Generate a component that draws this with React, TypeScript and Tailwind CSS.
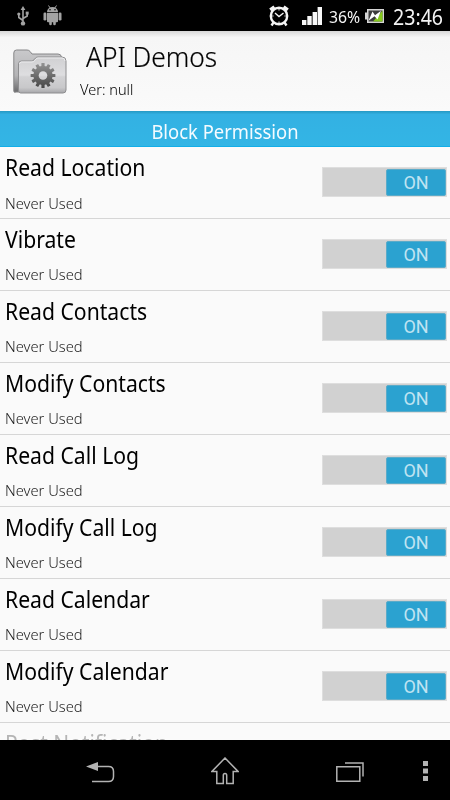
import React from "react";

const permissions = [
  "Read Location",
  "Vibrate",
  "Read Contacts",
  "Modify Contacts",
  "Read Call Log",
  "Modify Call Log",
  "Read Calendar",
  "Modify Calendar",
];

const gearTeeth = [0, 30, 60, 90, 120, 150, 180, 210, 240, 270, 300, 330];

function UsbIcon() {
  return (
    <svg width="12" height="20" viewBox="0 0 12 20" fill="none" stroke="#a3a3a3" strokeWidth="1.6">
      <path d="M6 3v14M6 14.5 1.8 11.5V8M6 12.5l4.2-2.5V7.5" />
      <path d="M6 0 3.6 4h4.8z" fill="#a3a3a3" stroke="none" />
      <circle cx="6" cy="17.4" r="2.2" fill="#a3a3a3" stroke="none" />
      <circle cx="1.8" cy="8" r="1.6" fill="#a3a3a3" stroke="none" />
      <path d="M8.7 5.6h3v3h-3z" fill="#a3a3a3" stroke="none" />
    </svg>
  );
}

function AndroidIcon() {
  return (
    <svg width="19" height="21" viewBox="0 0 19 21" fill="#a3a3a3">
      <path d="M4 7a5.5 5 0 0 1 11 0z" />
      <path d="m5.5.5 2 3M13.5.5l-2 3" stroke="#a3a3a3" strokeWidth="1" />
      <path d="M4 7.8h11v8.4a1 1 0 0 1-1 1h-1.2V19a1.3 1.3 0 0 1-2.6 0v-1.8H8.8V19a1.3 1.3 0 0 1-2.6 0v-1.8H5a1 1 0 0 1-1-1z" />
      <rect x="0.5" y="7.5" width="2.9" height="8" rx="1.3" />
      <rect x="15.6" y="7.5" width="2.9" height="8" rx="1.3" />
      <circle cx="7" cy="4.8" r="0.8" fill="#000" />
      <circle cx="12" cy="4.8" r="0.8" fill="#000" />
    </svg>
  );
}

function AlarmIcon() {
  return (
    <svg width="20" height="22" viewBox="0 0 20 22" fill="none" stroke="#f4f4f4">
      <circle cx="10" cy="11" r="8.2" strokeWidth="2.4" />
      <path d="M1.2 4.8 5.4 1.8M18.8 4.8l-4.2-3" strokeWidth="3.4" />
      <path d="m4.5 17.5-2 3M15.5 17.5l2 3" strokeWidth="2.4" />
      <path d="m6 8 4 3.5L14.5 8" strokeWidth="1.4" />
      <path d="M10 4v1.5M10 16.5V18M3.2 11h1.3M15.5 11h1.3" strokeWidth="1" />
    </svg>
  );
}

function SignalIcon() {
  return (
    <svg width="20" height="18" viewBox="0 0 20 18" fill="#f7f7f7">
      <path d="M0 13h4.4v5H0zM5.3 9h4.4v9H5.3zM10.6 5H15v13h-4.4zM15.6 0H20v18h-4.4z" />
    </svg>
  );
}

function BatteryIcon() {
  return (
    <svg width="20" height="16" viewBox="0 0 20 16">
      <path d="M2 1h17v14H2zM0 4.5h2v7H0z" fill="#d5d5d5" />
      <path d="M3.5 2.5h14v11h-14z" fill="#3c3c3c" />
      <path d="M17.5 2.5v11H8z" fill="#86c91d" />
      <path d="m3.5 12.8 4-9.2 2.5 3.6L16 2.7l-3.500 8.800-3-3.300z" fill="#fff" />
    </svg>
  );
}

function FolderIcon() {
  return (
    <svg width="54" height="46" viewBox="0 0 54 46">
      <defs>
        <linearGradient id="folderBack" x1="0" y1="0" x2="0" y2="1">
          <stop offset="0" stopColor="#c9c9cb" />
          <stop offset="0.6" stopColor="#b4b4b6" />
          <stop offset="1" stopColor="#69696b" />
        </linearGradient>
        <linearGradient id="folderFront" x1="0" y1="0" x2="0" y2="1">
          <stop offset="0" stopColor="#d0d0d2" />
          <stop offset="0.5" stopColor="#dedee0" />
          <stop offset="0.55" stopColor="#d2d2d4" />
          <stop offset="0.85" stopColor="#c8c8ca" />
          <stop offset="1" stopColor="#a7a7aa" />
        </linearGradient>
        <linearGradient id="gear" gradientUnits="userSpaceOnUse" x1="0" y1="-12" x2="0" y2="12">
          <stop offset="0" stopColor="#929292" />
          <stop offset="1" stopColor="#484848" />
        </linearGradient>
        <mask id="gearMask">
          <circle r="9.7" fill="#fff" />
          {gearTeeth.map((angle) => (
            <rect key={angle} x="-1.6" y="-12.4" width="3.2" height="5" rx="0.5" fill="#fff" transform={`rotate(${angle})`} />
          ))}
          <circle r="4.3" fill="#000" />
        </mask>
      </defs>
      <path
        d="M.8 42V4Q.8 1 3.5 1H14q2 0 3.200 1.600L19 5h26q3 0 3.500 3v35H3Q.8 44 .8 42z"
        fill="url(#folderBack)"
        stroke="#868688"
      />
      <path
        d="M5.5 41V15q0-3 3-3h10q1.500 0 2.500-1.200L22.500 9q1-1 2.500-1h24q4 0 4 4v29q0 3-3 3H7.500q-2 0-2-3z"
        fill="url(#folderFront)"
        stroke="#8e8e90"
      />
      <path d="M6.5 15q0-2 2-2h10.500q1.500 0 2.700-1.400L23 10q.8-1 2-1h24q3 0 3 3" fill="none" stroke="#ececee" />
      <g transform="translate(30 26.5)">
        <rect x="-13" y="-13" width="26" height="26" fill="url(#gear)" mask="url(#gearMask)" />
      </g>
    </svg>
  );
}

function StatusBar() {
  return (
    <header className="flex h-[31px] shrink-0 items-center bg-black pr-[7px] pl-[17px] text-[#f4f4f4]">
      <UsbIcon />
      <span className="ml-[14px]">
        <AndroidIcon />
      </span>
      <span className="ml-auto">
        <AlarmIcon />
      </span>
      <span className="ml-[13px]">
        <SignalIcon />
      </span>
      <span className="ml-[7px] w-[30px] whitespace-nowrap">
        <span className="mt-[2px] inline-block origin-left scale-x-[0.93] text-[17px] leading-[29px]">36%</span>
      </span>
      <span className="ml-[6px]">
        <BatteryIcon />
      </span>
      <span className="ml-[8px] w-[50px] whitespace-nowrap">
        <span className="mt-px inline-block origin-left scale-x-[0.91] text-[21.5px] leading-[29px]">23:46</span>
      </span>
    </header>
  );
}

function Toggle() {
  return (
    <div className="mr-[3px] flex h-[30px] w-[125px] items-center justify-end border border-[#dedede] bg-[#d1d1d1]">
      <div className="flex h-[27px] w-[60px] items-center justify-center rounded-[2px] border border-[#5aabc9] bg-[#2ba2d0] pt-px font-[Roboto] text-[18px] text-[#c0e4f2]">
        ON
      </div>
    </div>
  );
}

function PermissionRow({ name }: { name: string }) {
  return (
    <li className="flex h-[71.95px] shrink-0 items-center justify-between border-b border-[#d6d6d6] pl-[5px]">
      <div className="flex h-full flex-col whitespace-nowrap">
        <span className="mt-[4px] block origin-left scale-x-[0.92] text-[23px] leading-[32px] text-black">
          {name}
        </span>
        <span className="mt-[9.5px] block origin-left scale-x-[0.98] text-[15px] leading-[20px] font-light text-[#222]">
          Never Used
        </span>
      </div>
      <Toggle />
    </li>
  );
}

function NavBar() {
  return (
    <footer className="flex h-[60px] shrink-0 items-center bg-black pt-[2px] pr-[22px] pl-[86px]">
      <svg className="mt-[2px]" width="29" height="22" viewBox="0 0 29 22" fill="none" stroke="#b3b3b3" strokeWidth="1.5">
        <path d="M11 5.5h11.5q5 0 5 5v5q0 5-5 5H6" />
        <path d="M0 5.5 12 1v9z" fill="#b3b3b3" stroke="none" />
      </svg>
      <svg className="ml-[96px]" width="28" height="28" viewBox="0 0 28 28" fill="none" stroke="#b3b3b3" strokeWidth="1.5">
        <path d="M14 1 .9 14.5h4.900v12h6.500v-8q0-2 1.700-2t1.700 2v8h6.500v-12h4.900z" />
      </svg>
      <svg className="mt-[2px] ml-[97px]" width="28" height="20" viewBox="0 0 28 20" fill="none" stroke="#b3b3b3" strokeWidth="1.5">
        <path d="M.8 4.8h23v14.400H.8zM9 1h18v13.500" />
      </svg>
      <svg className="ml-auto" width="5" height="20" viewBox="0 0 5 20" fill="#b3b3b3">
        <path d="M0 0h5v5H0zM0 7.5h5v5H0zM0 15h5v5H0z" />
      </svg>
    </footer>
  );
}

export default function App() {
  return (
    <div className="flex h-[800px] w-[450px] flex-col overflow-hidden bg-[#fafafa] font-['Noto_Sans',sans-serif]">
      <StatusBar />

      {/* App info */}
      <section className="flex h-[80px] shrink-0 items-start bg-linear-to-b from-[#d8d8d8] via-[#f6f6f6] via-8% to-[#fafafa] pl-[13px]">
        <div className="mt-[18px]">
          <FolderIcon />
        </div>
        <div className="ml-[13px] whitespace-nowrap text-black">
          <h1 className="mt-[7px] ml-[6px] origin-left scale-x-[0.94] text-[28px] leading-[36px] font-light [-webkit-text-stroke:0.2px_#000]">
            API Demos
          </h1>
          <p className="mt-[5px] origin-left scale-x-[0.97] text-[15px] leading-[20px] font-light">Ver: null</p>
        </div>
      </section>

      <h2 className="flex h-[36px] shrink-0 items-center justify-center border-b border-[#12aee8] bg-linear-to-b from-[#2599c3] via-[#33b1e3] via-10% to-[#33b5e5] pt-[6px] text-[20px] whitespace-nowrap text-[#f5fbff]">
        <span className="inline-block scale-x-[0.92]">Block Permission</span>
      </h2>

      {/* The last row is cut off by the navigation bar */}
      <ul className="flex min-h-0 flex-1 flex-col overflow-hidden">
        {permissions.map((name) => (
          <PermissionRow key={name} name={name} />
        ))}
        <li className="shrink-0 pl-[5px] whitespace-nowrap">
          <span className="mt-[4px] inline-block origin-left scale-x-[0.91] text-[23px] leading-[32px] text-[#b5b5b5]">
            Post Notification
          </span>
        </li>
      </ul>

      <NavBar />
    </div>
  );
}
